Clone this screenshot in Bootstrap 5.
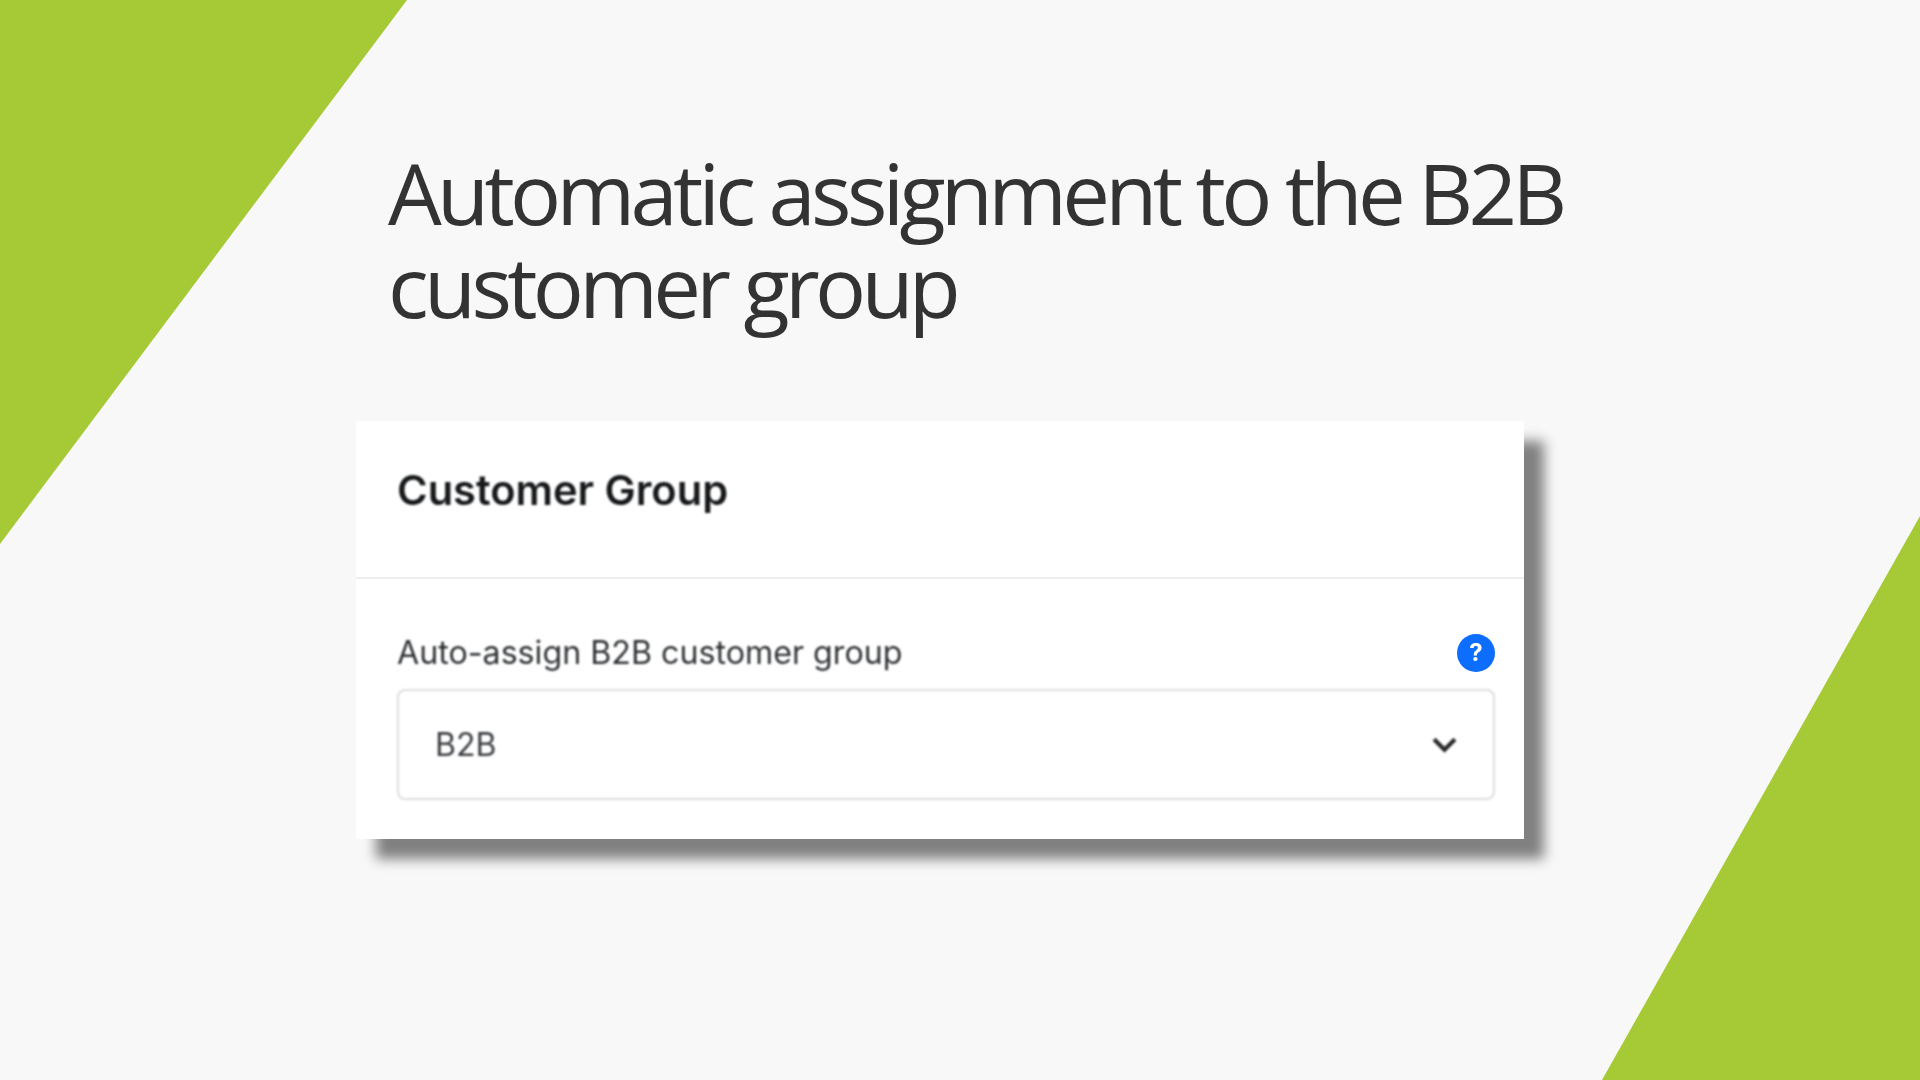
<!DOCTYPE html>
<html lang="en">
<head>
    <meta charset="UTF-8">
    <meta name="viewport" content="width=device-width, initial-scale=1.0">
    <title>Automatic assignment to the B2B customer group</title>
    <link rel="stylesheet" href="https://cdn.jsdelivr.net/npm/bootstrap@5.3.0/dist/css/bootstrap.min.css">
    <style>
        body { background: #f8f8f8; width: 1920px; height: 1080px; overflow: hidden; }
        .slide-bg { position: absolute; top: 0; left: 0; width: 1920px; height: 1080px; }
        .slide { position: relative; padding: 146px 0 0 388px; }
        .slide-title { font-family: "Open Sans", sans-serif; font-weight: 400; font-size: 85px; line-height: 93px; letter-spacing: -4.72px; color: #333; width: 1240px; margin: 0 0 89px; }
        .group-card { width: 1168px; margin-left: -32px; border: 0; border-radius: 0; background: #fff; box-shadow: 20px 20px 12px #808080; font-family: Inter, sans-serif; }
        .group-head { height: 158px; padding: 0 41px 18px; background: #fff; border-bottom: 2px solid #eee; border-radius: 0 !important; }
        .group-title { font-size: 41.6px; font-weight: 600; color: #16181a; filter: blur(.9px); }
        .group-body { padding: 50px 29px 39px 41px; }
        .group-label { font-size: 32.2px; color: #2e3133; filter: blur(.9px); }
        .help-dot { width: 38px; height: 38px; background: #0d6efd; color: #fff; font-size: 24px; font-weight: 700; filter: blur(.6px); }
        .group-select { height: 111px; padding-left: 36px; padding-top: 6px; font-size: 32px; color: #3a3d40; border: 2px solid #ddd; border-radius: 8px; filter: blur(.9px);
            background-image: url("data:image/svg+xml,%3csvg xmlns='http://www.w3.org/2000/svg' viewBox='0 0 24 16'%3e%3cpolyline points='2,3 12,13 22,3' fill='none' stroke='%23282828' stroke-width='4'/%3e%3c/svg%3e");
            background-size: 25px 17px; background-position: right 36px center; }
        .label-row { margin-bottom: 12px; }
    </style>
</head>
<body>
    <svg class="slide-bg" viewBox="0 0 1920 1080">
        <polygon points="0,0 407,0 0,544" fill="#a6c936"/>
        <polygon points="1920,516 1920,1080 1602,1080" fill="#a6c936"/>
    </svg>
    <div class="slide">
        <h1 class="slide-title">Automatic assignment to the B2B customer group</h1>
        <div class="card group-card">
            <div class="card-header group-head d-flex align-items-center">
                <span class="group-title">Customer Group</span>
            </div>
            <div class="card-body group-body">
                <div class="label-row d-flex justify-content-between align-items-center">
                    <label class="group-label" for="groupSelect">Auto-assign B2B customer group</label>
                    <span class="help-dot rounded-circle d-flex align-items-center justify-content-center">?</span>
                </div>
                <select id="groupSelect" class="form-select group-select">
                    <option>B2B</option>
                </select>
            </div>
        </div>
    </div>
</body>
</html>
